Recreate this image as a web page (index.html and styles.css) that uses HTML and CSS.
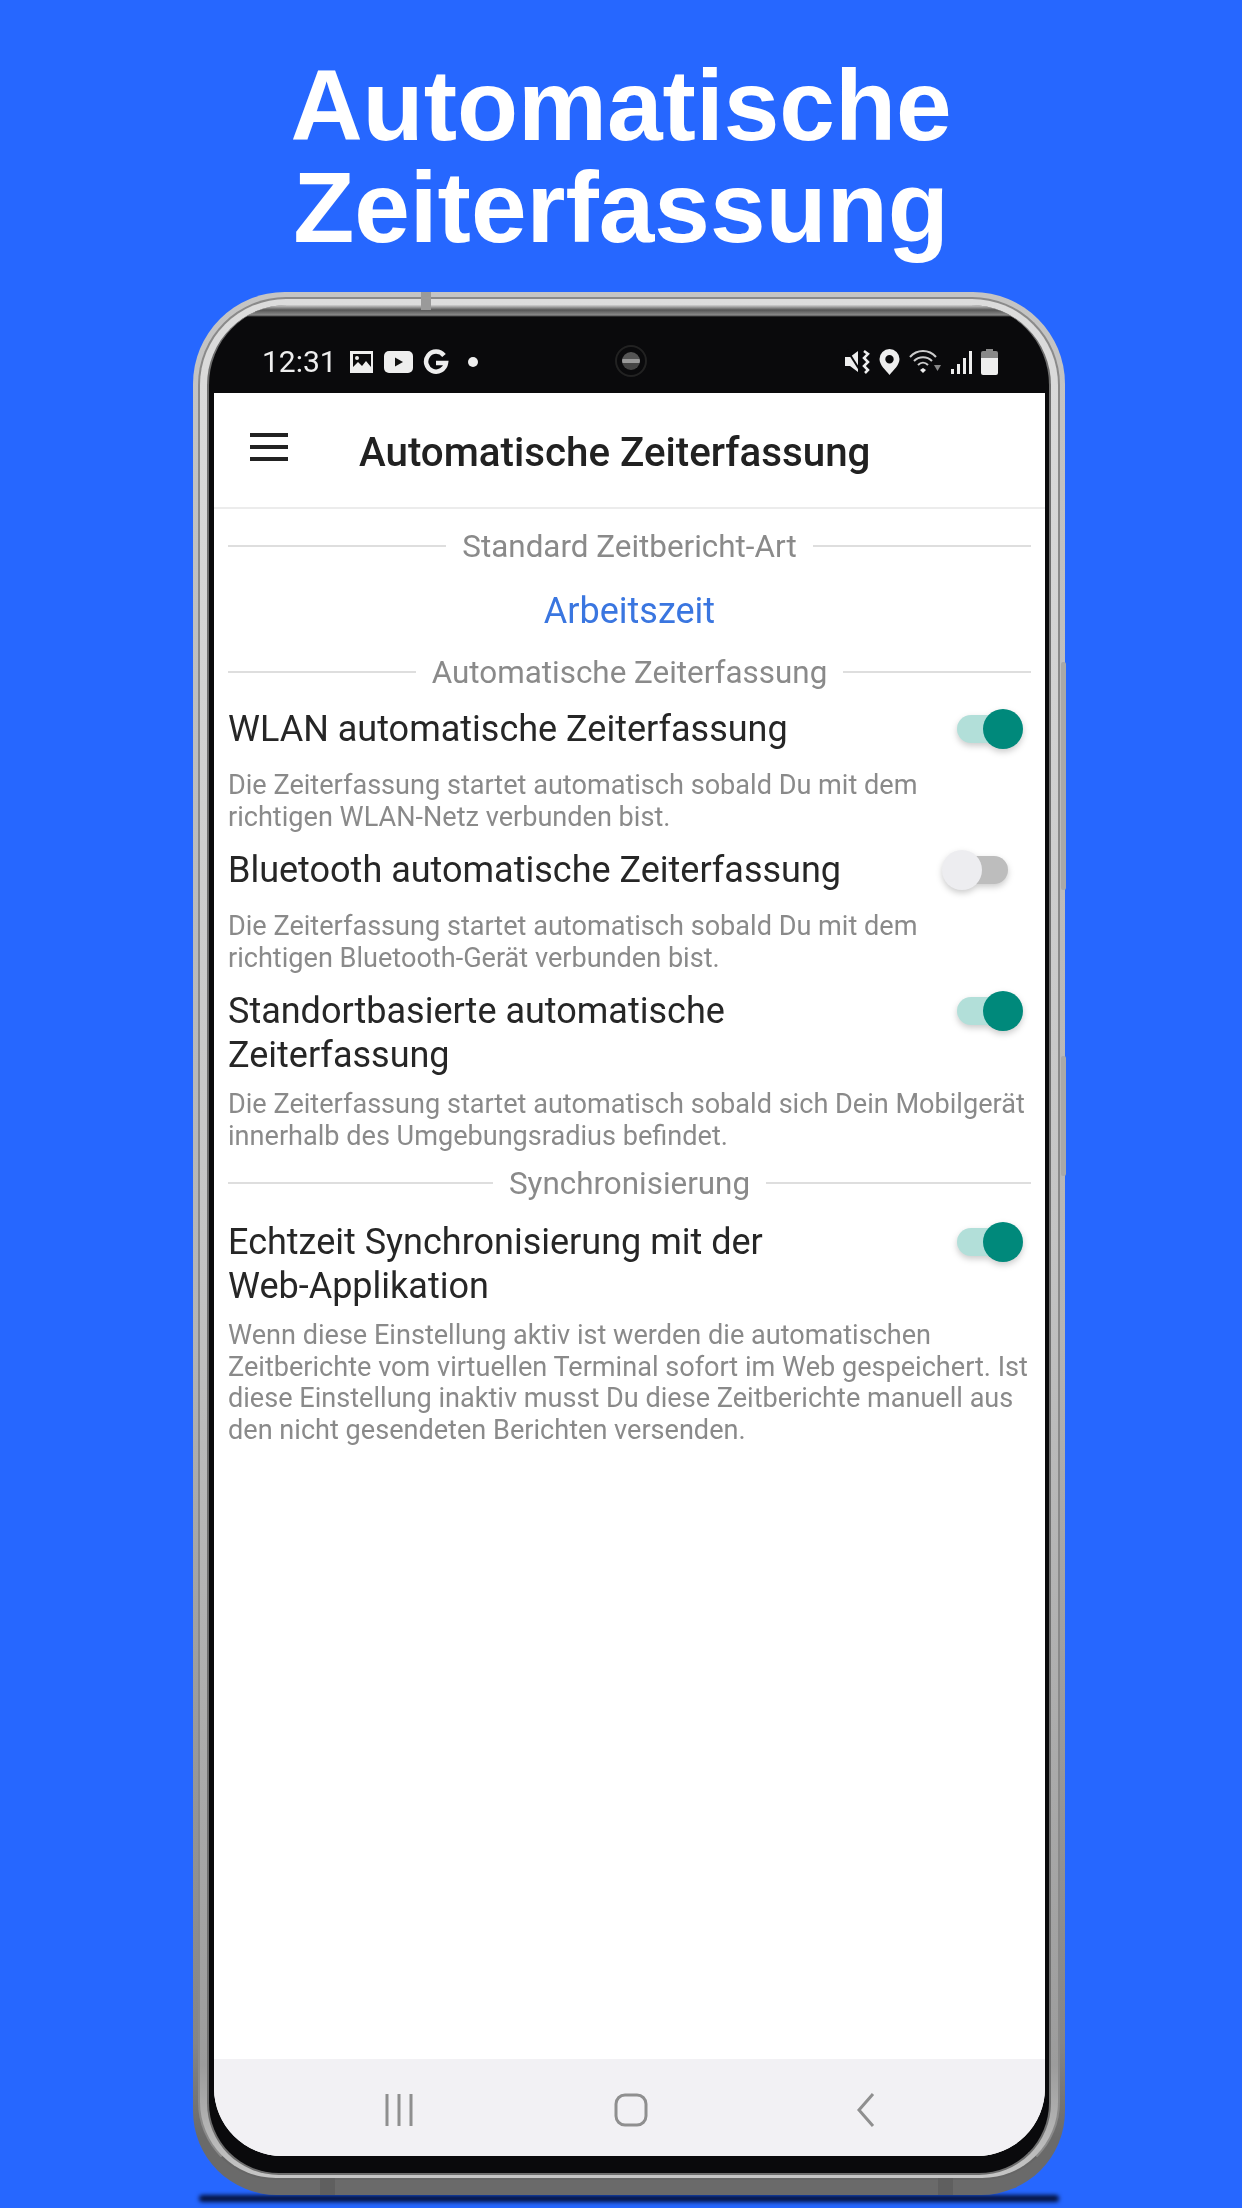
FILE: index.html
```html
<!DOCTYPE html>
<html lang="de">
<head>
    <meta charset="UTF-8">
    <meta name="viewport" content="width=device-width, initial-scale=1.0">
    <title>Automatische Zeiterfassung</title>
    <link rel="stylesheet" href="styles.css">
</head>
<body>
    <h1 class="headline">Automatische<br>Zeiterfassung</h1>

    <div class="phone">
        <span class="pin pin-top"></span>
        <span class="pin pin-left"></span>
        <span class="pin pin-right"></span>
        <span class="side-key key-power"></span>
        <span class="side-key key-volume"></span>
        <div class="rim">
            <div class="bezel">
                <!-- Statusleiste -->
                <div class="status">
                    <div class="status-left">
                        <span class="time">12:31</span>
                        <svg class="ico" width="25" height="24" viewBox="0 0 25 24">
                            <path fill="#eee" fill-rule="evenodd" d="M1 1h23v22H1zM4 4v13l5-5 4 4 4-5 5 6V4z"/>
                            <circle cx="8" cy="8" r="2" fill="#eee"/>
                        </svg>
                        <svg class="ico" width="29" height="22" viewBox="0 0 29 22">
                            <rect width="29" height="22" rx="5" fill="#eee"/>
                            <path fill="#111" d="M11 6.500l8 4.500-8 4.500z"/>
                        </svg>
                        <svg class="ico" width="26" height="26" viewBox="0 0 26 26">
                            <path fill="none" stroke="#eee" stroke-width="4.500" d="M21 6.500A10 10 0 1 0 23 14H13"/>
                        </svg>
                        <span class="dot"></span>
                    </div>
                    <span class="camera"><span class="lens"></span></span>
                    <div class="status-right">
                        <svg width="26" height="26" viewBox="0 0 26 26">
                            <path fill="#eee" d="M1 8h5l8-6v21l-8-6H1z"/>
                            <path fill="none" stroke="#0a0a0c" stroke-width="2" d="M3 1l14 22"/>
                            <path fill="none" stroke="#eee" stroke-width="2.500" d="M20 2l4 3-4 4 4 4-4 4 4 4-3 3"/>
                        </svg>
                        <svg width="21" height="26" viewBox="0 0 21 26">
                            <path fill="#eee" fill-rule="evenodd" d="M10.500 0A10 10 0 0 1 20.500 10c0 6-6 11-10 16-4-5-10-10-10-16A10 10 0 0 1 10.500 0zM10.500 6a4.200 4.200 0 1 0 0 8.400 4.200 4.200 0 0 0 0-8.400z"/>
                        </svg>
                        <svg width="32" height="26" viewBox="0 0 32 26">
                            <g fill="none" stroke="#ccc" stroke-width="2">
                                <path d="M1 8c7-8 19-8 26 0"/>
                                <path d="M5 12c5-5 13-5 18 0"/>
                                <path d="M9 16c3-3 7-3 10 0"/>
                            </g>
                            <path fill="#eee" d="M14 19l3 2-3 3-3-3z"/>
                            <path fill="#888" d="M25 16h7l-3.500 6z"/>
                        </svg>
                        <svg width="22" height="26" viewBox="0 0 22 26">
                            <path fill="#eee" d="M1 20h3v5H1zM7 15h3v10H7zM13 9h3v16h-3zM19 2h3v23h-3z"/>
                        </svg>
                        <svg width="17" height="26" viewBox="0 0 17 26">
                            <path fill="#888" d="M5 0h7v2h3a2 2 0 0 1 2 2v5H0V4a2 2 0 0 1 2-2h3z"/>
                            <path fill="#eee" d="M0 9h17v15a2 2 0 0 1-2 2H2a2 2 0 0 1-2-2z"/>
                        </svg>
                    </div>
                </div>

                <div class="screen">
                    <div class="appbar">
                        <span class="burger"><i></i><i></i><i></i></span>
                        <span class="appbar-title">Automatische Zeiterfassung</span>
                    </div>

                    <div class="content">
                        <div class="divider">Standard Zeitbericht-Art</div>
                        <div class="type-link">Arbeitszeit</div>

                        <div class="divider divider-auto">Automatische Zeiterfassung</div>
                        <div class="setting">
                            <div class="setting-title">WLAN automatische Zeiterfassung</div>
                            <span class="toggle on"></span>
                            <p class="setting-text">Die Zeiterfassung startet automatisch sobald Du mit dem<br>richtigen WLAN-Netz verbunden bist.</p>
                        </div>
                        <div class="setting">
                            <div class="setting-title">Bluetooth automatische Zeiterfassung</div>
                            <span class="toggle"></span>
                            <p class="setting-text">Die Zeiterfassung startet automatisch sobald Du mit dem<br>richtigen Bluetooth-Gerät verbunden bist.</p>
                        </div>
                        <div class="setting two-line">
                            <div class="setting-title">Standortbasierte automatische<br>Zeiterfassung</div>
                            <span class="toggle on"></span>
                            <p class="setting-text">Die Zeiterfassung startet automatisch sobald sich Dein Mobilgerät<br>innerhalb des Umgebungsradius befindet.</p>
                        </div>

                        <div class="divider divider-sync">Synchronisierung</div>
                        <div class="setting two-line">
                            <div class="setting-title">Echtzeit Synchronisierung mit der<br>Web-Applikation</div>
                            <span class="toggle on"></span>
                            <p class="setting-text">Wenn diese Einstellung aktiv ist werden die automatischen<br>Zeitberichte vom virtuellen Terminal sofort im Web gespeichert. Ist<br>diese Einstellung inaktiv musst Du diese Zeitberichte manuell aus<br>den nicht gesendeten Berichten versenden.</p>
                        </div>
                    </div>

                    <div class="navbar">
                        <svg width="30" height="34" viewBox="0 0 30 34">
                            <path fill="none" stroke="#8f8f8f" stroke-width="3" d="M3 1v32M15 1v32M27 1v32"/>
                        </svg>
                        <svg class="nav-home" width="34" height="34" viewBox="0 0 34 34">
                            <rect x="2" y="2" width="30" height="30" rx="9" fill="none" stroke="#8f8f8f" stroke-width="3"/>
                        </svg>
                        <svg class="nav-back" width="20" height="34" viewBox="0 0 20 34">
                            <path fill="none" stroke="#8f8f8f" stroke-width="3" d="M17 1L3 17l14 16"/>
                        </svg>
                    </div>
                </div>
            </div>
        </div>
    </div>
</body>
</html>
```

FILE: styles.css
```css
* { box-sizing: border-box; }
html, body {
    margin: 0;
    height: 2208px;
    overflow: hidden;
}
body {
    background: #2667ff;
    font-family: Roboto, "Liberation Sans", sans-serif;
}

.headline {
    margin: 0;
    padding-top: 54px;
    color: #fff;
    font-family: "Liberation Sans", Arial, sans-serif;
    font-size: 100px;
    font-weight: bold;
    line-height: 102px;
    text-align: center;
}

/* telefon */
.phone {
    position: relative;
    width: 872px;
    height: 1903px;
    margin: 34px 0 0 193px;
    padding: 5px 5px 15px;
    border-radius: 92px 92px 84px 84px;
    background: linear-gradient(#c4c4c4, #b4b4b4 55%, #858585 92%, #6a6a6a 97%);
}
.phone::after {
    content: "";
    position: absolute;
    z-index: -1;
    left: 6px;
    right: 6px;
    bottom: -7px;
    height: 7px;
    border-radius: 4px;
    background: #04123f;
    filter: blur(2px);
}
.rim {
    height: 100%;
    padding: 6px 7px 3px;
    border: 2px solid #8a8a8a;
    border-bottom-color: #666;
    border-radius: 88px 88px 78px 78px;
    background: linear-gradient(#dcdcdc, #c4c4c4 50%, #9c9c9c 94%, #c6c6c6);
}
.bezel {
    display: flex;
    flex-direction: column;
    height: 100%;
    padding: 12px 4px 17px 5px;
    border: 2px solid #6e6e6e;
    border-top: 0;
    border-radius: 80px 80px 72px 72px;
    background: linear-gradient(#d0d0d0, #555 5px, #8a8a8a 10px, #0a0a0c 12px);
}
.pin {
    position: absolute;
    background: #9a9a9a;
}
.pin-top { left: 228px; top: 0; width: 10px; height: 18px; }
.pin-left { left: 127px; bottom: 0; width: 15px; height: 17px; background: #5f5f5f; }
.pin-right { left: 745px; bottom: 0; width: 15px; height: 17px; background: #5f5f5f; }
.side-key {
    position: absolute;
    left: 868px;
    width: 5px;
    border-radius: 2px;
    background: #a8a8a8;
}
.key-power { top: 370px; height: 228px; }
.key-volume { top: 764px; height: 120px; }

/* statusleiste */
.status {
    position: relative;
    display: flex;
    flex: none;
    align-items: center;
    justify-content: space-between;
    height: 76px;
    padding: 14px 47px 0 48px;
    filter: blur(.5px);
}
.status-left, .status-right {
    display: flex;
    align-items: center;
}
.status-left { gap: 10px; }
.status-right { gap: 9px; }
.time {
    margin-right: 2px;
    color: #eee;
    font-size: 30px;
    line-height: 36px;
}
.dot {
    width: 10px;
    height: 10px;
    margin-left: 9px;
    border-radius: 50%;
    background: #eee;
}
.camera {
    position: absolute;
    left: 401px;
    top: 28px;
    display: flex;
    align-items: center;
    justify-content: center;
    width: 32px;
    height: 32px;
    border: 2px solid #222;
    border-radius: 50%;
}
.lens {
    width: 18px;
    height: 18px;
    border-radius: 50%;
    background: linear-gradient(#555 40%, #999 40%, #999 60%, #444 60%);
}

/* bildschirm */
.screen {
    display: flex;
    flex: 1;
    flex-direction: column;
    min-height: 0;
    border-radius: 0 0 68px 68px;
    background: #fff;
    overflow: hidden;
    filter: blur(.5px);
}
.appbar {
    display: flex;
    flex: none;
    align-items: center;
    height: 116px;
    padding-bottom: 2px;
    border-bottom: 2px solid #ececec;
}
.burger {
    display: flex;
    flex-direction: column;
    gap: 8px;
    width: 38px;
    margin: -4px 0 0 36px;
}
.burger i {
    height: 4px;
    background: #222;
}
.appbar-title {
    margin: 6px 0 0 71px;
    color: #212121;
    font-size: 40.300px;
    font-weight: 500;
}

.content {
    flex: 1;
    padding: 19px 14px 0;
}
.divider {
    display: flex;
    align-items: center;
    gap: 16px;
    height: 36px;
    color: #8a8a8a;
    font-size: 31.400px;
}
.divider::before, .divider::after {
    content: "";
    flex: 1;
    height: 2px;
    background: #dedede;
}
.divider-auto { margin-top: 22px; }
.divider-sync { margin: 15px 0 2px; }
.type-link {
    margin-top: 25px;
    margin-bottom: -1px;
    color: #3a76e0;
    font-size: 36px;
    line-height: 44px;
    text-align: center;
}

.setting {
    position: relative;
    margin-bottom: -2px;
}
.setting-title {
    padding-top: 17px;
    color: #262626;
    font-size: 36px;
    line-height: 44px;
}
.setting-text {
    margin: 19px 0 0;
    color: #8a8a8a;
    font-size: 27.100px;
    line-height: 31.500px;
}
.two-line .setting-text { margin-top: 12px; }
.toggle {
    position: absolute;
    right: 8px;
    top: 19px;
    width: 66px;
    height: 40px;
    filter: drop-shadow(0 3px 3px rgba(0, 0, 0, .2));
}
.toggle::before {
    content: "";
    position: absolute;
    left: 21px;
    right: 0;
    top: 6px;
    height: 28px;
    border-radius: 14px;
    background: #bdbdbd;
}
.toggle::after {
    content: "";
    position: absolute;
    left: 0;
    top: 0;
    width: 40px;
    height: 40px;
    border-radius: 50%;
    background: #ededf0;
}
.toggle:not(.on) { right: 23px; }
.toggle.on::before {
    left: 0;
    right: 14px;
    background: #b2dfd9;
}
.toggle.on::after {
    left: 26px;
    background: #00897b;
}

.navbar {
    display: flex;
    flex: none;
    align-items: center;
    height: 97px;
    padding: 4px 0 0 170px;
    background: #f2f1f4;
}
.nav-home { margin-left: 200px; }
.nav-back { margin-left: 208px; }
```
